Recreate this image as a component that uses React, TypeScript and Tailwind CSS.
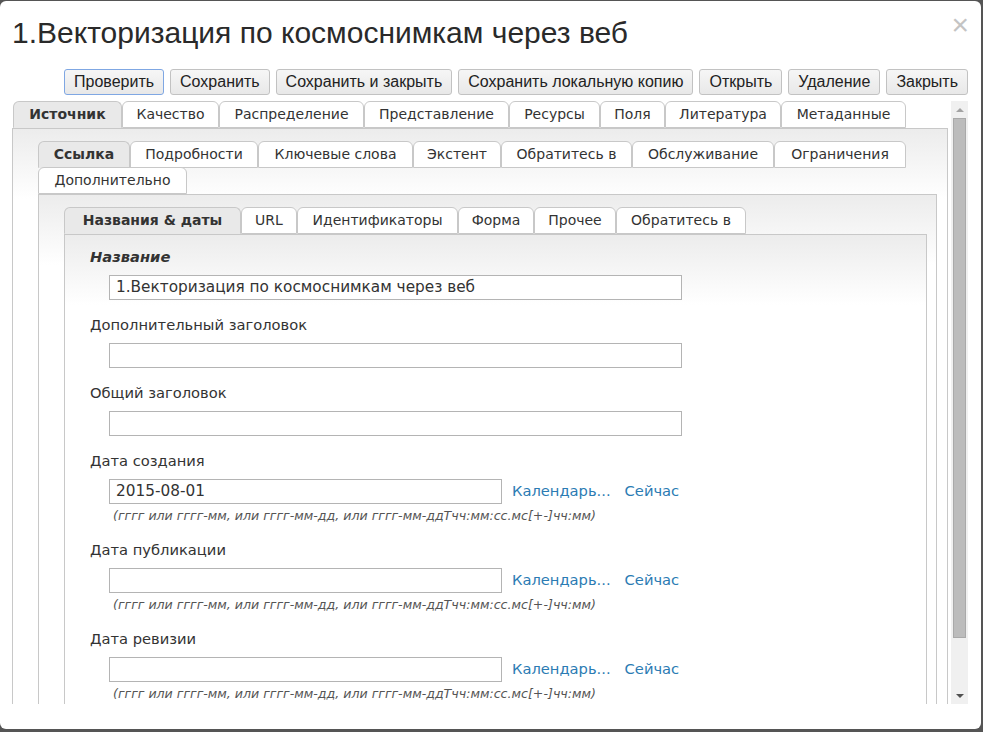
import React from 'react'

// Tab definitions: label + measured width so rows line up like the original
type Tab = { label: string; w: string; active?: boolean }

const mainTabs: Tab[] = [
  { label: 'Источник', w: 'w-[109px]', active: true },
  { label: 'Качество', w: 'w-[97px]' },
  { label: 'Распределение', w: 'w-[145px]' },
  { label: 'Представление', w: 'w-[145px]' },
  { label: 'Ресурсы', w: 'w-[91px]' },
  { label: 'Поля', w: 'w-[65px]' },
  { label: 'Литература', w: 'w-[116px]' },
  { label: 'Метаданные', w: 'w-[125px]' },
]

const refTabs: Tab[] = [
  { label: 'Ссылка', w: 'w-[92px]', active: true },
  { label: 'Подробности', w: 'w-[128px]' },
  { label: 'Ключевые слова', w: 'w-[155px]' },
  { label: 'Экстент', w: 'w-[88px]' },
  { label: 'Обратитесь в', w: 'w-[131px]' },
  { label: 'Обслуживание', w: 'w-[142px]' },
  { label: 'Ограничения', w: 'w-[132px]' },
]

const refTabsRow2: Tab[] = [{ label: 'Дополнительно', w: 'w-[149px]' }]

const citeTabs: Tab[] = [
  { label: 'Названия & даты', w: 'w-[177px]', active: true },
  { label: 'URL', w: 'w-[56px]' },
  { label: 'Идентификаторы', w: 'w-[161px]' },
  { label: 'Форма', w: 'w-[76px]' },
  { label: 'Прочее', w: 'w-[82px]' },
  { label: 'Обратитесь в', w: 'w-[130px]' },
]

const buttons = [
  'Проверить',
  'Сохранить',
  'Сохранить и закрыть',
  'Сохранить локальную копию',
  'Открыть',
  'Удаление',
  'Закрыть',
]

const sans = "font-['DejaVu_Sans',Verdana,sans-serif]"
const arial = "font-['Liberation_Sans',Arial,sans-serif]"
const hint = '(гггг или гггг-мм, или гггг-мм-дд, или гггг-мм-ддТчч:мм:сс.мс[+-]чч:мм)'

const TabRow = ({ tabs, className = '' }: { tabs: Tab[]; className?: string }) => (
  <div className={`flex ${className}`}>
    {tabs.map(t => (
      <div
        key={t.label}
        className={`${t.w} h-[27px] flex items-center justify-center border border-[#c8c8c8] rounded-t-[6px] text-[14px] text-[#333] ${sans} ${
          t.active ? 'bg-[#e9e9e9] font-bold border-b-[#e9e9e9]' : 'bg-white'
        }`}
      >
        {t.label}
      </div>
    ))}
  </div>
)

const Panel = ({ className, children }: { className: string; children: React.ReactNode }) => (
  <div
    className={`border border-[#c8c8c8] border-b-0 bg-[linear-gradient(#ececec,#ffffff_70px)] ${className}`}
  >
    {children}
  </div>
)

const Input = ({ w, value }: { w: string; value?: string }) => (
  <div className={`${w} h-[25px] border border-[#b4b4b4] bg-white pl-[6px] text-[15.3px] leading-[23px] text-[#333] ${sans}`}>
    {value}
  </div>
)

const Label = ({ text, bold }: { text: string; bold?: boolean }) => (
  <div className={`h-[20px] leading-[20px] text-[14.7px] text-[#333] ${sans} ${bold ? 'font-bold italic' : ''}`}>
    {text}
  </div>
)

const TextField = ({ label, value, bold }: { label: string; value?: string; bold?: boolean }) => (
  <div className="mb-[15px]">
    <Label text={label} bold={bold} />
    <div className="mt-[8px] ml-[19px]">
      <Input w="w-[573px]" value={value} />
    </div>
  </div>
)

const DateField = ({ label, value }: { label: string; value?: string }) => (
  <div className="mb-[16px]">
    <Label text={label} />
    <div className="mt-[8px] ml-[19px] flex items-center">
      <Input w="w-[393px]" value={value} />
      <span className={`ml-[10px] text-[14.7px] text-[#2b7bb3] ${sans}`}>Календарь...</span>
      <span className={`ml-[14px] text-[14.7px] text-[#2b7bb3] ${sans}`}>Сейчас</span>
    </div>
    <div className={`ml-[23px] mt-[4px] h-[16px] leading-[16px] text-[12.6px] italic text-[#555] ${sans}`}>{hint}</div>
  </div>
)

const Scrollbar = () => (
  <div className="w-[17px] h-full bg-[#f0f0f0] flex flex-col items-center">
    <div className="h-[17px] flex items-center justify-center">
      <div className="w-0 h-0 border-l-[4px] border-r-[4px] border-b-[4px] border-l-transparent border-r-transparent border-b-[#a3a3a3]" />
    </div>
    <div className="w-[13px] h-[520px] bg-[#bcbcbc] border border-[#a9a9a9]" />
    <div className="flex-1" />
    <div className="h-[17px] flex items-center justify-center">
      <div className="w-0 h-0 border-l-[4px] border-r-[4px] border-t-[4px] border-l-transparent border-r-transparent border-t-[#505050]" />
    </div>
  </div>
)

export default function App() {
  return (
    <div className="w-[983px] h-[732px] bg-[#555] pt-[1px] overflow-hidden">
      <div className="relative w-[981px] h-[728px] bg-white rounded-[6px] pl-[12px] pr-[13px]">
        {/* Title */}
        <h1 className={`pt-[12px] h-[52px] text-[30px] leading-[40px] text-[#2a2a2a] ${arial}`}>
          1.Векторизация по космоснимкам через веб
        </h1>
        <div className={`absolute right-[12px] top-[9px] text-[30px] leading-[30px] text-[#c4c4c4] ${arial}`}>
          ×
        </div>

        {/* Toolbar */}
        <div className="mt-[16px] flex justify-end gap-[6px]">
          {buttons.map((b, i) => (
            <div
              key={b}
              className={`h-[26px] px-[9px] flex items-center rounded-[3px] border bg-[linear-gradient(#f6f6f6,#e8e8e8)] text-[16px] text-[#222] ${arial} ${
                i === 0 ? 'border-[#7fa7e3]' : 'border-[#c2c2c2]'
              }`}
            >
              {b}
            </div>
          ))}
        </div>

        {/* Scrollable editor area */}
        <div className="mt-[6px] h-[603px] flex">
          <div className="w-[939px] h-full overflow-hidden">
            <div className="w-[936px] pl-[1px]">
              <TabRow tabs={mainTabs} />
            </div>
            <Panel className="w-[936px] h-[600px] pt-[12px] pl-[25px] pr-[10px]">
              <TabRow tabs={refTabs} />
              <TabRow tabs={refTabsRow2} className="-mt-[1px]" />
              <Panel className="w-[899px] h-[600px] pt-[12px] pl-[25px] pr-[9px]">
                <TabRow tabs={citeTabs} />
                <Panel className="w-[863px] h-[600px] pt-[12px] pl-[25px]">
                  <TextField label="Название" value="1.Векторизация по космоснимкам через веб" bold />
                  <TextField label="Дополнительный заголовок" />
                  <TextField label="Общий заголовок" />
                  <DateField label="Дата создания" value="2015-08-01" />
                  <DateField label="Дата публикации" />
                  <DateField label="Дата ревизии" />
                </Panel>
              </Panel>
            </Panel>
          </div>
          <Scrollbar />
        </div>
      </div>
    </div>
  )
}
